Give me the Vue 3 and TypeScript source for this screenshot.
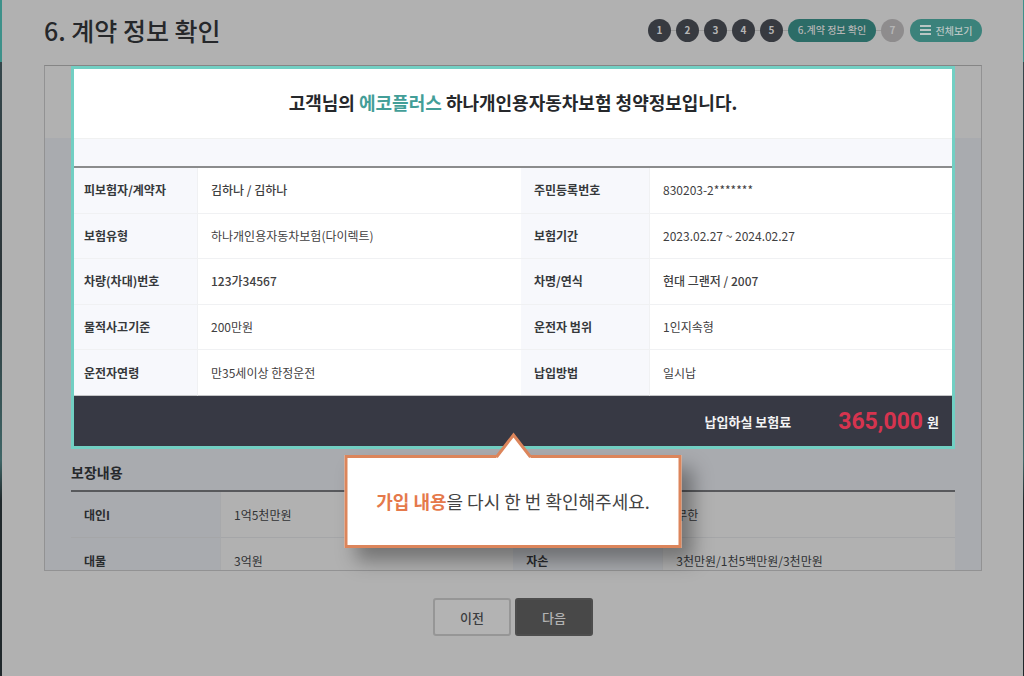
<script setup lang="ts">
interface Row {
  label: string
  value: string
  label2: string
  value2: string
  strong?: boolean
  strong2?: boolean
}

const doneSteps: number[] = [1, 2, 3, 4, 5]

const contractRows: Row[] = [
  { label: '피보험자/계약자', value: '김하나 / 김하나', label2: '주민등록번호', value2: '830203-2*******', strong: true },
  { label: '보험유형', value: '하나개인용자동차보험(다이렉트)', label2: '보험기간', value2: '2023.02.27 ~ 2024.02.27' },
  { label: '차량(차대)번호', value: '123가34567', label2: '차명/연식', value2: '현대 그랜저 / 2007', strong: true, strong2: true },
  { label: '물적사고기준', value: '200만원', label2: '운전자 범위', value2: '1인지속형' },
  { label: '운전자연령', value: '만35세이상 한정운전', label2: '납입방법', value2: '일시납' },
]

const coverageRows: Row[] = [
  { label: '대인I', value: '1억5천만원', label2: '', value2: '무한' },
  { label: '대물', value: '3억원', label2: '자손', value2: '3천만원/1천5백만원/3천만원' },
]
</script>

<template>
  <main class="page">
    <header class="header">
      <h1>6. 계약 정보 확인</h1>
      <nav class="nav" aria-label="진행 단계">
        <ol class="steps">
          <li v-for="n in doneSteps" :key="n" class="step">{{ n }}</li>
          <li class="step current" aria-current="step">6.계약 정보 확인</li>
          <li class="step pending">7</li>
        </ol>
        <button type="button" class="all">
          <svg width="11" height="10" viewBox="0 0 11 10" aria-hidden="true">
            <path d="M0 1h11M0 5h11M0 9h11" stroke="currentColor" stroke-width="2" />
          </svg>
          전체보기
        </button>
      </nav>
    </header>

    <div class="stage">
      <div class="panel">
        <section class="summary">
          <h2>고객님의 <em>에코플러스</em> 하나개인용자동차보험 청약정보입니다.</h2>
          <div class="band"></div>
          <table class="contract">
            <colgroup>
              <col class="c-label" /><col /><col class="c-label2" /><col class="c-value2" />
            </colgroup>
            <tbody>
              <tr v-for="row in contractRows" :key="row.label">
                <th scope="row">{{ row.label }}</th>
                <td :class="{ strong: row.strong }">{{ row.value }}</td>
                <th scope="row">{{ row.label2 }}</th>
                <td :class="{ strong: row.strong2 }">{{ row.value2 }}</td>
              </tr>
            </tbody>
          </table>
          <div class="total">
            <span>납입하실 보험료</span>
            <span class="price"><strong>365,000</strong> 원</span>
          </div>
        </section>

        <section class="coverage">
          <h3>보장내용</h3>
          <table>
            <colgroup>
              <col class="d-label" /><col /><col class="d-label" /><col class="d-value2" />
            </colgroup>
            <tbody>
              <tr v-for="row in coverageRows" :key="row.label">
                <th scope="row">{{ row.label }}</th>
                <td>{{ row.value }}</td>
                <th scope="row">{{ row.label2 }}</th>
                <td>{{ row.value2 }}</td>
              </tr>
            </tbody>
          </table>
        </section>
      </div>

      <div class="tip" role="note">
        <svg class="arrow" width="36" height="27" viewBox="0 0 36 27" aria-hidden="true">
          <path d="M0 27 L2 24 L18 3 L34 24 L36 27Z" fill="#fff" />
          <path d="M1 25 L18 3 L35 25" fill="none" stroke="#dc855b" stroke-width="3" />
        </svg>
        <p><b>가입 내용</b>을 다시 한 번 확인해주세요.</p>
      </div>
    </div>

    <div class="actions">
      <button type="button" class="prev">이전</button>
      <button type="button" class="next">다음</button>
    </div>
  </main>
</template>

<style>
body {
  margin: 0;
  background: #b1b1b1;
}
</style>

<style scoped>
.page {
  box-sizing: border-box;
  min-height: 100vh;
  padding: 0 41px 0 42px;
  border-left: 2px solid;
  border-right: 1px solid;
  border-image: linear-gradient(#3d918a 63px, #35474c 63px, #2b3438 280px, #3f6667 460px, #20282b 500px) 1;
  background: #b1b1b1;
  color: #26282b;
  font-family: "Noto Sans CJK KR", "Noto Sans", sans-serif;
  font-size: 12px;
}
button {
  font-family: inherit;
  cursor: pointer;
}
h1, h2, h3, p {
  margin: 0;
}
.header {
  display: flex;
  align-items: center;
  justify-content: space-between;
  height: 60px;
  margin-bottom: 5px;
}
h1 {
  font-size: 25px;
  font-weight: 500;
  line-height: 36px;
}
.nav {
  display: flex;
  align-items: center;
  gap: 6px;
}
.steps {
  display: flex;
  gap: 5px;
  margin: 0;
  padding: 0;
  list-style: none;
  background: linear-gradient(#999, #999) center / 100% 1px no-repeat;
}
.step {
  box-sizing: border-box;
  width: 23px;
  height: 23px;
  border-radius: 12px;
  background: #373a40;
  color: #b5b5b5;
  font-size: 10px;
  font-weight: 700;
  line-height: 22px;
  text-align: center;
  white-space: nowrap;
}
.current {
  width: 88px;
  background: #2c6c67;
  font-weight: 500;
}
.pending {
  background: #8e8c8d;
}
.all {
  display: flex;
  align-items: center;
  justify-content: center;
  gap: 5px;
  width: 72px;
  height: 23px;
  padding: 0;
  border: 0;
  border-radius: 12px;
  background: #3b827b;
  color: #b9c6c4;
  font-size: 10px;
  font-weight: 500;
  white-space: nowrap;
}
.stage {
  position: relative;
}
.panel {
  box-sizing: border-box;
  height: 506px;
  padding: 0 26px;
  overflow: hidden;
  border: 1px solid #929293;
  border-top-color: #858585;
  background: linear-gradient(#b1b1b1 72px, #a9abaf 72px);
}
.summary {
  border: 3px solid #72cfc3;
  background: #fff;
}
h2 {
  height: 69px;
  font-size: 18px;
  font-weight: 700;
  line-height: 67px;
  text-align: center;
}
h2 em {
  color: #439e98;
  font-style: normal;
}
.band {
  height: 27px;
  border-top: 1px solid #f0f1f1;
  border-bottom: 2px solid #8b8c8d;
  background: #f7f8fc;
}
table {
  width: 100%;
  border-collapse: separate;
  border-spacing: 0;
  table-layout: fixed;
}
th, td {
  box-sizing: border-box;
  padding: 0 12px 0 13px;
  text-align: left;
  white-space: nowrap;
  line-height: 18px;
}
th {
  font-weight: 700;
  color: #36383b;
}
td {
  font-weight: 400;
}
.contract {
  height: 228px;
}
.contract th, .contract td {
  border-bottom: 1px solid #f0f1f3;
}
.contract tr:last-child > * {
  border-bottom-color: #c4c5c7;
}
.contract th {
  border-right: 1px solid #f0f1f3;
  background: #f7f8fc;
}
.contract th:first-child {
  padding-left: 10px;
}
.contract td {
  color: #3f4041;
}
.contract .strong {
  font-weight: 500;
}
.c-label {
  width: 124px;
}
.c-label2 {
  width: 129px;
}
.c-value2 {
  width: 302px;
}
.total {
  display: flex;
  align-items: center;
  justify-content: flex-end;
  gap: 47px;
  height: 50px;
  padding-right: 13px;
  background: #373944;
  color: #f3f3f4;
  font-size: 13px;
  font-weight: 700;
}
.price {
  display: flex;
  align-items: center;
  gap: 4px;
}
.price strong {
  color: #d6344f;
  font-family: Roboto, "Liberation Sans", sans-serif;
  font-size: 23px;
  font-weight: 700;
}
.coverage h3 {
  height: 41px;
  border-bottom: 2px solid #58595c;
  font-size: 14px;
  font-weight: 700;
  line-height: 47px;
}
.coverage tr {
  height: 46px;
}
.coverage th, .coverage td {
  border-bottom: 1px solid #a5a6a8;
}
.coverage th {
  border-right: 1px solid #a8a9ab;
  color: #292b2e;
}
.coverage td {
  background: #b1b1b1;
  color: #303234;
}
.d-label {
  width: 150px;
}
.d-value2 {
  width: 33%;
}
.tip {
  box-sizing: border-box;
  position: absolute;
  top: 390px;
  left: 50%;
  width: 337px;
  padding: 30px 0;
  transform: translateX(-50%);
  border: 3px solid #dc855b;
  background: #fff;
  box-shadow: 11px 13px 18px rgba(0, 0, 0, 0.35);
  text-align: center;
}
.tip p {
  color: #434343;
  font-size: 18px;
  line-height: 27px;
  white-space: nowrap;
}
.tip b {
  color: #e5794b;
  font-weight: 700;
}
.arrow {
  position: absolute;
  bottom: 100%;
  left: 50%;
  margin: 0 0 -1px -18px;
}
.actions {
  display: flex;
  justify-content: center;
  gap: 4px;
  padding-top: 27px;
}
.actions button {
  width: 78px;
  height: 38px;
  padding: 0;
  border: 2px solid #969696;
  border-radius: 3px;
  background: #b3b3b3;
  color: #3b3d40;
  font-size: 13px;
  font-weight: 500;
}
.actions .next {
  border-color: #4d4d4d;
  background: #484848;
  color: #b3b3b3;
}
</style>
